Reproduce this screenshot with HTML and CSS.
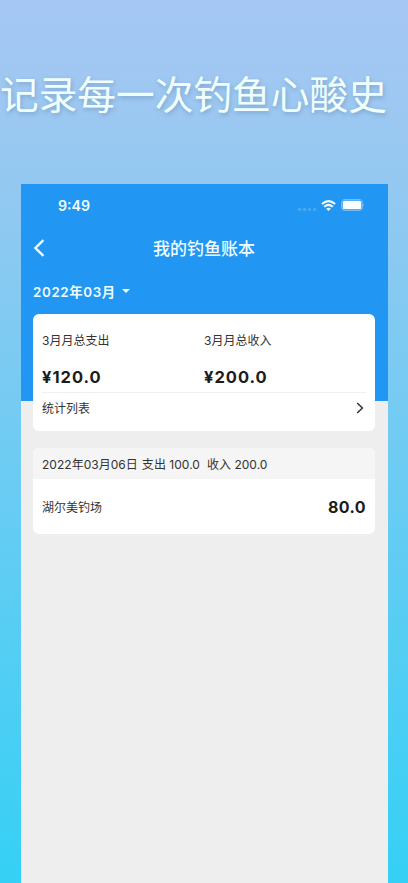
FILE: index.html
```html
<!DOCTYPE html>
<html lang="zh-CN">
<head>
<meta charset="utf-8">
<meta name="viewport" content="width=device-width, initial-scale=1">
<title>我的钓鱼账本</title>
<link rel="stylesheet" href="styles.css">
</head>
<body>
<h1 class="slogan">记录每一次钓鱼心酸史</h1>
<main class="phone">
  <header class="status">
    <span class="time">9:49</span>
    <span class="signal"><i></i><i></i><i></i><i></i></span>
    <svg class="wifi" viewBox="0 0 15 11" width="15" height="11" fill="none" stroke="currentColor" stroke-width="2"><path d="M.9 4.1Q7.5-1.9 14.1 4.1M3.2 6.8Q7.5 3 11.8 6.8"/><path d="M5.1 8.7Q7.5 6.7 9.9 8.7L7.5 11Z" fill="currentColor" stroke="none"/></svg>
    <svg class="battery" viewBox="0 0 24 12" width="24" height="12"><rect x=".5" y=".5" width="21" height="11" rx="3" fill="none" stroke="#73bcf8"/><rect x="1.7" y="1.8" width="18.6" height="8.4" rx="1.5" fill="#f7ffff"/><path d="M22.5 4.3Q24 6 22.5 7.7Z" fill="#73bcf8"/></svg>
  </header>
  <nav class="nav">
    <svg class="back" viewBox="0 0 12 18" width="12" height="18" fill="none" stroke="currentColor" stroke-width="2.4"><path d="M10.4 1.2 2.4 9l8 7.8"/></svg>
    <h2 class="title">我的钓鱼账本</h2>
  </nav>
  <div class="month"><span>2022年03月</span><i class="caret"></i></div>
  <section class="card summary">
    <div class="totals">
      <div><div class="label">3月月总支出</div><div class="amount">¥120.0</div></div>
      <div><div class="label">3月月总收入</div><div class="amount">¥200.0</div></div>
    </div>
    <div class="stats"><span>统计列表</span><svg viewBox="0 0 8 12" width="8" height="12" fill="none" stroke="currentColor" stroke-width="1.5"><path d="M1.2 1 6.4 6l-5.2 5"/></svg></div>
  </section>
  <section class="card day">
    <div class="day-head"><span>2022年03月06日</span><span>支出 100.0</span><span class="income">收入 200.0</span></div>
    <div class="entry"><span>湖尔美钓场</span><strong class="amount">80.0</strong></div>
  </section>
</main>
</body>
</html>
```
FILE: styles.css
```css
* { box-sizing: border-box; }
body {
  margin: 0;
  height: 883px;
  overflow: hidden;
  background: linear-gradient(#a6c7f4 0%, #99c8f1 16%, #35d0f5 100%);
  font-family: Inter, "Noto Sans CJK SC", sans-serif;
  font-size: 12px;
  color: #333;
}
.slogan {
  margin: 0;
  height: 184px;
  padding: 66px 0 0;
  font-size: 38.7px;
  line-height: 58px;
  font-weight: 400;
  white-space: nowrap;
  color: #f0ffff;
  text-shadow: 1px 2px 4px rgba(70, 100, 130, .35);
}
.phone {
  width: 367px;
  height: 699px;
  margin-left: 21px;
  padding: 0 13px 0 12px;
  background: linear-gradient(#2196f3 217px, #eee 217px);
}
.status {
  display: flex;
  align-items: center;
  height: 42px;
  padding: 0 10px 0 25px;
  color: #effcff;
}
.time { font-size: 14.2px; font-weight: 600; }
.signal { display: flex; gap: 2px; margin: 8px 5px 0 auto; }
.signal i { width: 3px; height: 3px; border-radius: 1px; background: #49a9f5; }
.battery { margin-left: 5px; }
.nav {
  display: grid;
  grid-template-columns: 12px 1fr 12px;
  align-items: center;
  height: 44px;
  color: #effcff;
}
.title {
  margin: 0;
  padding-top: 2px;
  text-align: center;
  font-size: 17px;
  line-height: 24px;
  font-weight: 500;
}
.month {
  display: flex;
  align-items: center;
  gap: 6px;
  height: 44px;
  padding-bottom: 2px;
  color: #effcff;
  font-size: 13.4px;
  font-weight: 600;
  letter-spacing: .6px;
}
.caret { border: 4.5px solid transparent; border-top-color: currentColor; border-bottom: 0; }
.card { border-radius: 6px; background: #fff; overflow: hidden; }
.summary { height: 117px; padding: 0 9px; }
.totals {
  display: grid;
  grid-template-columns: 162px 1fr;
  height: 79px;
  padding-top: 17px;
  border-bottom: 1px solid #f0f0f0;
}
.label { line-height: 20px; }
.amount { font-size: 16px; font-weight: 700; color: #1c1c1c; letter-spacing: .4px; }
.label + .amount { margin-top: 16px; line-height: 20px; font-size: 16.5px; letter-spacing: 1px; }
.stats { display: flex; justify-content: space-between; align-items: center; height: 29px; padding-right: 2px; color: #333; }
.day { height: 86px; margin-top: 17px; }
.day-head { display: flex; align-items: center; height: 31px; padding: 0 9px; background: #f5f5f5; gap: 4px; letter-spacing: .03px; }
.income { margin-left: 3px; }
.entry { display: flex; justify-content: space-between; align-items: center; height: 55px; padding: 0 9px; }
```
